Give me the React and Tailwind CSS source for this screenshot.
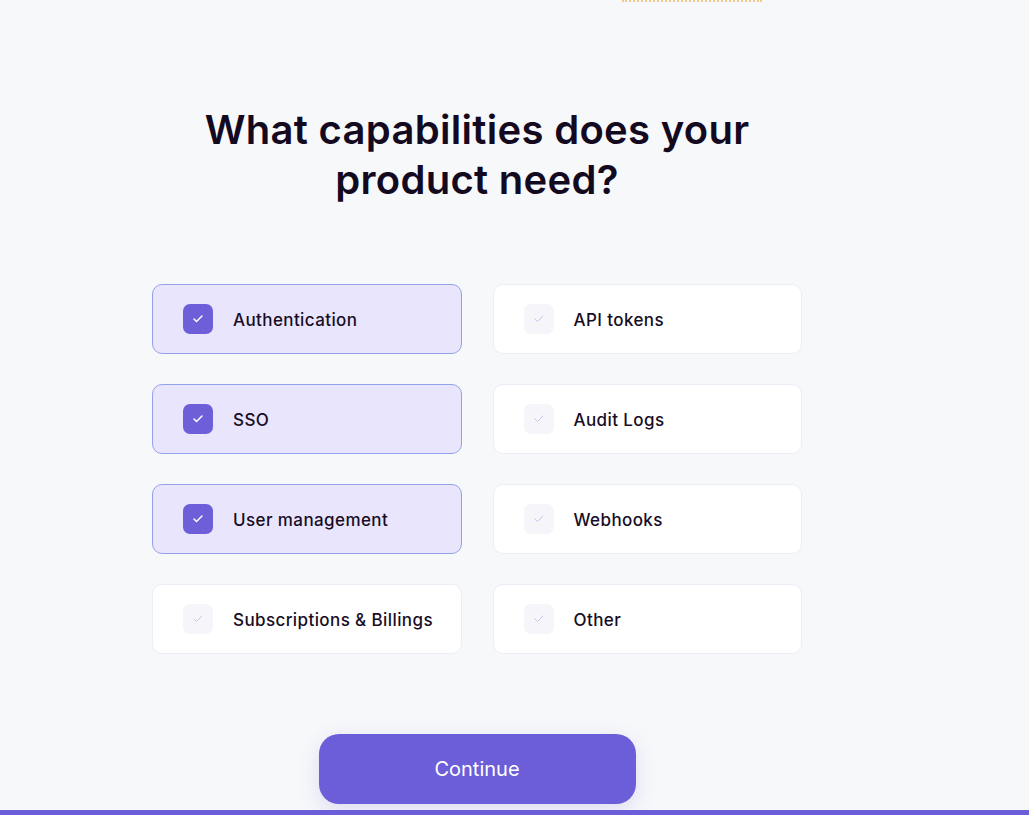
import { Check } from "lucide-react";

const options = [
  { label: "Authentication", checked: true },
  { label: "API tokens", checked: false },
  { label: "SSO", checked: true },
  { label: "Audit Logs", checked: false },
  { label: "User management", checked: true },
  { label: "Webhooks", checked: false },
  { label: "Subscriptions & Billings", checked: false },
  { label: "Other", checked: false },
];

function Option({ label, checked }) {
  return (
    <div
      className={`h-[70px] rounded-[10px] border flex items-center pl-[30px] ${
        checked
          ? "bg-[#e9e5fd] border-[#93a3ea]"
          : "bg-white border-[#eceef6]"
      }`}
    >
      <div
        className={`w-[30px] h-[30px] rounded-[7px] flex items-center justify-center ${
          checked ? "bg-[#6e5fd9]" : "bg-[#f5f5fa]"
        }`}
      >
        <Check
          size={12}
          strokeWidth={checked ? 3 : 2}
          className={checked ? "text-white" : "text-[#c9c2f0]"}
        />
      </div>
      <span className="ml-[20px] mt-[3px] text-[17px] font-medium tracking-[0.4px] text-[#170d24]">
        {label}
      </span>
    </div>
  );
}

export default function App() {
  return (
    <div
      className="relative w-full h-[815px] bg-[#f7f8fa] overflow-hidden"
      style={{ fontFamily: "Inter, 'Open Sans', sans-serif" }}
    >
      <div className="absolute top-0 left-[622px] w-[140px] border-t-2 border-dotted border-[#f2c98a]" />

      <div className="w-[650px] ml-[152px] pt-[105px] flex flex-col items-center">
        <h1 className="text-[40px] leading-[50px] font-semibold text-[#140a1f] text-center tracking-[0.3px]">
          What capabilities does your
          <br />
          product need?
        </h1>

        <div className="mt-[79px] w-full grid grid-cols-2 gap-x-[31px] gap-y-[30px]">
          {options.map((o) => (
            <Option key={o.label} {...o} />
          ))}
        </div>

        <button className="mt-[80px] w-[317px] h-[70px] rounded-[20px] bg-[#6c5dd8] text-white text-[20px] shadow-[0_6px_20px_rgba(108,93,216,0.18)]">
          Continue
        </button>
      </div>

      <div className="absolute bottom-0 left-0 right-0 h-[5px] bg-[#6c5dd8]" />
    </div>
  );
}
